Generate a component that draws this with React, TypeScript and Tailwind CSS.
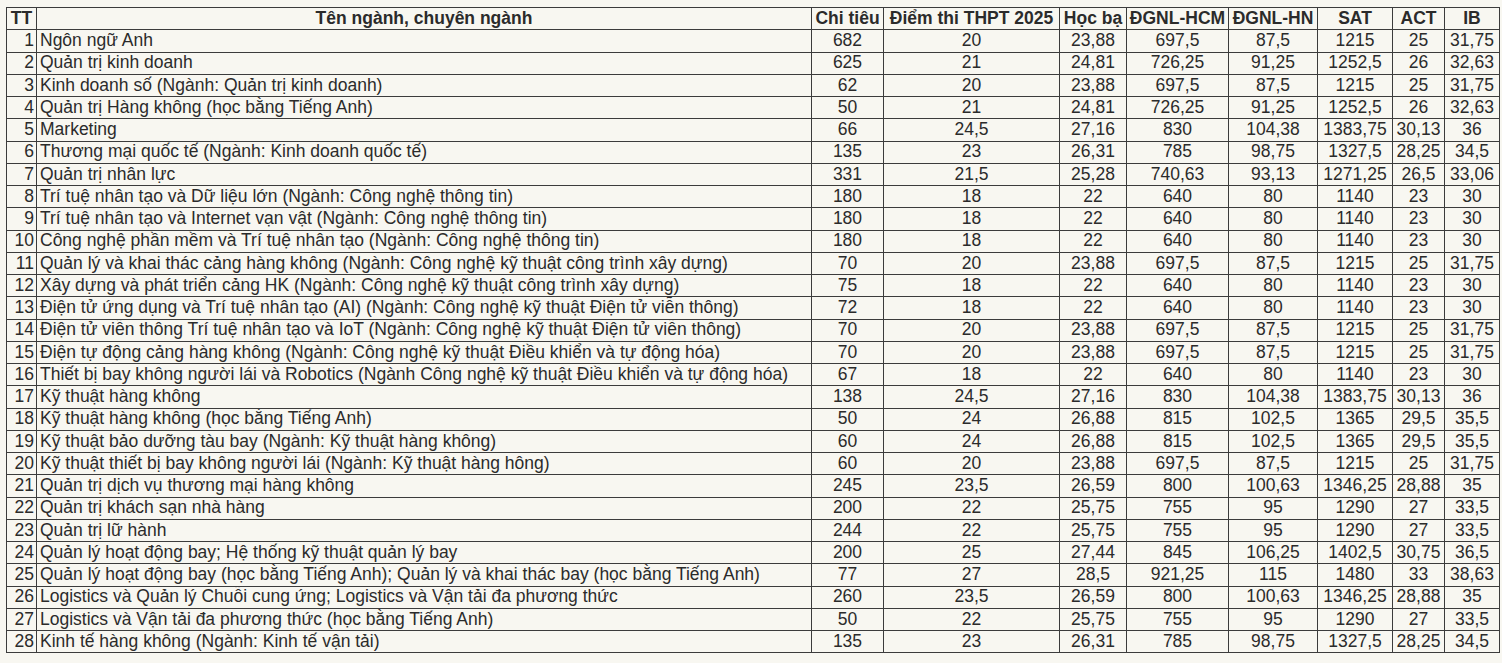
import React from "react";

const rows: (string | number)[][] = [
  [1, "Ngôn ngữ Anh", "682", "20", "23,88", "697,5", "87,5", "1215", "25", "31,75"],
  [2, "Quản trị kinh doanh", "625", "21", "24,81", "726,25", "91,25", "1252,5", "26", "32,63"],
  [3, "Kinh doanh số (Ngành: Quản trị kinh doanh)", "62", "20", "23,88", "697,5", "87,5", "1215", "25", "31,75"],
  [4, "Quản trị Hàng không (học bằng Tiếng Anh)", "50", "21", "24,81", "726,25", "91,25", "1252,5", "26", "32,63"],
  [5, "Marketing", "66", "24,5", "27,16", "830", "104,38", "1383,75", "30,13", "36"],
  [6, "Thương mại quốc tế (Ngành: Kinh doanh quốc tế)", "135", "23", "26,31", "785", "98,75", "1327,5", "28,25", "34,5"],
  [7, "Quản trị nhân lực", "331", "21,5", "25,28", "740,63", "93,13", "1271,25", "26,5", "33,06"],
  [8, "Trí tuệ nhân tạo và Dữ liệu lớn (Ngành: Công nghệ thông tin)", "180", "18", "22", "640", "80", "1140", "23", "30"],
  [9, "Trí tuệ nhân tạo và Internet vạn vật (Ngành: Công nghệ thông tin)", "180", "18", "22", "640", "80", "1140", "23", "30"],
  [10, "Công nghệ phần mềm và Trí tuệ nhân tạo (Ngành: Công nghệ thông tin)", "180", "18", "22", "640", "80", "1140", "23", "30"],
  [11, "Quản lý và khai thác cảng hàng không (Ngành: Công nghệ kỹ thuật công trình xây dựng)", "70", "20", "23,88", "697,5", "87,5", "1215", "25", "31,75"],
  [12, "Xây dựng và phát triển cảng HK (Ngành: Công nghệ kỹ thuật công trình xây dựng)", "75", "18", "22", "640", "80", "1140", "23", "30"],
  [13, "Điện tử ứng dụng và Trí tuệ nhân tạo (AI) (Ngành: Công nghệ kỹ thuật Điện tử viễn thông)", "72", "18", "22", "640", "80", "1140", "23", "30"],
  [14, "Điện tử viễn thông Trí tuệ nhân tạo và IoT (Ngành: Công nghệ kỹ thuật Điện tử viễn thông)", "70", "20", "23,88", "697,5", "87,5", "1215", "25", "31,75"],
  [15, "Điện tự động cảng hàng không (Ngành: Công nghệ kỹ thuật Điều khiển và tự động hóa)", "70", "20", "23,88", "697,5", "87,5", "1215", "25", "31,75"],
  [16, "Thiết bị bay không người lái và Robotics (Ngành Công nghệ kỹ thuật Điều khiển và tự động hóa)", "67", "18", "22", "640", "80", "1140", "23", "30"],
  [17, "Kỹ thuật hàng không", "138", "24,5", "27,16", "830", "104,38", "1383,75", "30,13", "36"],
  [18, "Kỹ thuật hàng không (học bằng Tiếng Anh)", "50", "24", "26,88", "815", "102,5", "1365", "29,5", "35,5"],
  [19, "Kỹ thuật bảo dưỡng tàu bay (Ngành: Kỹ thuật hàng không)", "60", "24", "26,88", "815", "102,5", "1365", "29,5", "35,5"],
  [20, "Kỹ thuật thiết bị bay không người lái (Ngành: Kỹ thuật hàng hông)", "60", "20", "23,88", "697,5", "87,5", "1215", "25", "31,75"],
  [21, "Quản trị dịch vụ thương mại hàng không", "245", "23,5", "26,59", "800", "100,63", "1346,25", "28,88", "35"],
  [22, "Quản trị khách sạn nhà hàng", "200", "22", "25,75", "755", "95", "1290", "27", "33,5"],
  [23, "Quản trị lữ hành", "244", "22", "25,75", "755", "95", "1290", "27", "33,5"],
  [24, "Quản lý hoạt động bay; Hệ thống kỹ thuật quản lý bay", "200", "25", "27,44", "845", "106,25", "1402,5", "30,75", "36,5"],
  [25, "Quản lý hoạt động bay (học bằng Tiếng Anh); Quản lý và khai thác bay (học bằng Tiếng Anh)", "77", "27", "28,5", "921,25", "115", "1480", "33", "38,63"],
  [26, "Logistics và Quản lý Chuỗi cung ứng; Logistics và Vận tải đa phương thức", "260", "23,5", "26,59", "800", "100,63", "1346,25", "28,88", "35"],
  [27, "Logistics và Vận tải đa phương thức (học bằng Tiếng Anh)", "50", "22", "25,75", "755", "95", "1290", "27", "33,5"],
  [28, "Kinh tế hàng không (Ngành: Kinh tế vận tải)", "135", "23", "26,31", "785", "98,75", "1327,5", "28,25", "34,5"],
];

const headers = ["TT", "Tên ngành, chuyên ngành", "Chi tiêu", "Điểm thi THPT 2025", "Học bạ", "ĐGNL-HCM", "ĐGNL-HN", "SAT", "ACT", "IB"];

const cell = "border-r border-b border-[#3c3c3c] flex items-center whitespace-nowrap overflow-hidden leading-none";

export default function App() {
  return (
    <div className="w-[1502px] h-[663px] bg-[#f8f7f1] pt-[7px] pl-[6px] text-[#2b2b2b] font-['Liberation_Sans',Arial,sans-serif] text-[17.5px]">
      <div className="grid grid-cols-[30px_775px_72px_176px_67px_102px_89px_75px_52px_55px] auto-rows-[22.25px] w-[1494px] border-l border-t border-[#3c3c3c]">
        {headers.map((h) => (
          <div key={h} className={`${cell} font-bold justify-center px-[1px]`}>
            {h}
          </div>
        ))}
        {rows.map((r) => (
          <React.Fragment key={r[0]}>
            {r.map((v, i) => (
              <div
                key={i}
                className={`${cell} ${i === 0 ? "justify-end pr-[2px]" : i === 1 ? "justify-start pl-[3px]" : "justify-center"}`}
              >
                {v}
              </div>
            ))}
          </React.Fragment>
        ))}
      </div>
    </div>
  );
}
